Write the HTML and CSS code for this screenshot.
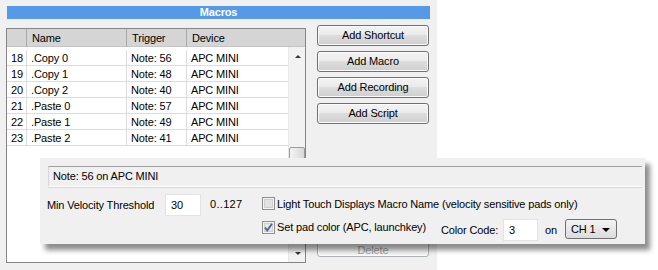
FILE: index.html
```html
<!DOCTYPE HTML>
<html>
<head>
	<meta http-equiv="Content-Type" content="text/html; charset=utf-8">
	<title>Macros</title>
	<link rel="stylesheet" href="styles.css">
</head>
<body>
<div class="screen">
	<div class="window">
		<div class="title">Macros</div>
		<div class="main">
			<div class="listbox">
				<div class="head">
					<div class="hcell num"></div>
					<div class="hcell">Name</div>
					<div class="hcell">Trigger</div>
					<div class="hcell last">Device</div>
				</div>
				<div class="body">
					<div class="rows">
						<div class="row"><span class="num">18</span><span>.Copy 0</span><span>Note: 56</span><span>APC MINI</span></div>
						<div class="row"><span class="num">19</span><span>.Copy 1</span><span>Note: 48</span><span>APC MINI</span></div>
						<div class="row"><span class="num">20</span><span>.Copy 2</span><span>Note: 40</span><span>APC MINI</span></div>
						<div class="row"><span class="num">21</span><span>.Paste 0</span><span>Note: 57</span><span>APC MINI</span></div>
						<div class="row"><span class="num">22</span><span>.Paste 1</span><span>Note: 49</span><span>APC MINI</span></div>
						<div class="row"><span class="num">23</span><span>.Paste 2</span><span>Note: 41</span><span>APC MINI</span></div>
					</div>
					<div class="scrollbar">
						<div class="arrow up"></div>
						<div class="thumb"></div>
						<div class="arrow down"></div>
					</div>
				</div>
			</div>
			<div class="buttons">
				<div class="btn">Add Shortcut</div>
				<div class="btn">Add Macro</div>
				<div class="btn">Add Recording</div>
				<div class="btn">Add Script</div>
				<div class="btn disabled">Delete</div>
			</div>
		</div>
	</div>

	<div class="popup">
		<div class="note">Note: 56 on APC MINI</div>
		<div class="line">
			<span class="lbl-vel">Min Velocity Threshold</span>
			<div class="field vel">30</div>
			<span class="range">0..127</span>
			<span class="check">
				<svg width="13" height="13" viewBox="0 0 13 13"><rect x="0.5" y="0.5" width="12" height="12" fill="#f4f4f4" stroke="#8e8f8f"/><rect x="2.5" y="2.5" width="8" height="8" fill="#e2e2e2" stroke="#d0d0d0"/></svg>
			</span>
			<span class="ctext">Light Touch Displays Macro Name (velocity sensitive pads only)</span>
		</div>
		<div class="line second">
			<span class="padcheck">
				<span class="check">
					<svg width="13" height="13" viewBox="0 0 13 13"><rect x="0.5" y="0.5" width="12" height="12" fill="#f4f4f4" stroke="#8e8f8f"/><rect x="2.5" y="2.5" width="8" height="8" fill="#e6e6e6" stroke="#d0d0d0"/><path d="M3 6.5 L5.2 9.5 L10 2.8" fill="none" stroke="#4a5f97" stroke-width="1.8"/></svg>
				</span>
				<span class="ctext">Set pad color (APC, launchkey)</span>
			</span>
			<span class="lbl-code">Color Code:</span>
			<div class="field code">3</div>
			<span class="on">on</span>
			<div class="select">CH 1<span class="caret"></span></div>
		</div>
	</div>
</div>
</body>
</html>
```

FILE: styles.css
```css
*{
	margin: 0;
	padding: 0;
	box-sizing: border-box;
}
body{
	background: #fff;
	font-family: "Liberation Sans", Arial, sans-serif;
	font-size: 11px;
	letter-spacing: -0.15px;
	color: #000;
}
.screen{
	position: relative;
	width: 658px;
	height: 270px;
}
.window{
	width: 437px;
	height: 270px;
	background: #f0f0f0;
	padding: 6px 0 0 6px;
}
.title{
	margin-left: 1px;
	width: 423px;
	height: 13px;
	background: #5599e8;
	color: #fff;
	font-weight: bold;
	text-align: center;
	line-height: 13px;
}
.main{
	display: flex;
	align-items: flex-start;
	margin-top: 6px;
}

/* list */
.listbox{
	width: 300px;
	height: 235px;
	margin-top: 3px;
	border: 1px solid #858585;
	background: #fff;
	display: flex;
	flex-direction: column;
}
.head{
	display: grid;
	grid-template-columns: 20px 100px 60px 1fr;
	height: 18px;
	background: #d5d5d5;
	border-bottom: 1px solid #c4c4c4;
}
.hcell{
	line-height: 18px;
	padding-left: 5px;
	border-right: 1px solid #a9a9a9;
}
.hcell.last{
	border-right: none;
}
.body{
	flex: 1;
	display: flex;
}
.rows{
	width: 281px;
	padding-top: 3px;
}
.row{
	display: grid;
	grid-template-columns: 20px 100px 60px 1fr;
	height: 16px;
	line-height: 16px;
	border-bottom: 1px solid #dcdcdc;
}
.row span{
	padding-left: 4px;
	border-right: 1px solid #dcdcdc;
}
.row span:last-child{
	border-right: none;
}
.row .num{
	padding-left: 0;
	padding-right: 3px;
	text-align: right;
}
.scrollbar{
	width: 17px;
	background: #f2f2f2;
	border-left: 1px solid #e8e8e8;
	position: relative;
}
.arrow{
	position: absolute;
	left: 6px;
	width: 0;
	height: 0;
	border-left: 3px solid transparent;
	border-right: 3px solid transparent;
}
.arrow.up{
	top: 8px;
	border-bottom: 3px solid #333;
}
.arrow.down{
	bottom: 7px;
	border-top: 3px solid #333;
}
.thumb{
	position: absolute;
	top: 100px;
	left: 0;
	width: 16px;
	height: 18px;
	border: 1px solid #9a9a9a;
	border-radius: 2px;
	background: linear-gradient(to right, #f4f4f4, #d8d8d8);
}

/* buttons */
.buttons{
	margin-left: 11px;
	width: 112px;
	height: 232px;
	display: flex;
	flex-direction: column;
	gap: 5px;
}
.btn{
	height: 21px;
	line-height: 19px;
	text-align: center;
	border: 1px solid #707070;
	border-radius: 3px;
	background: linear-gradient(#f3f3f3 0%, #ebebeb 45%, #dddddd 50%, #cfcfcf 100%);
	box-shadow: inset 0 0 0 1px #fcfcfc;
}
.btn.disabled{
	margin-top: auto;
	padding-top: 7px;
	line-height: 13px;
	color: #a0a0a0;
	border-color: #adb2b5;
	background: #f4f4f4;
}

/* popup panel */
.popup{
	position: absolute;
	left: 40px;
	top: 158px;
	width: 605px;
	height: 86px;
	background: #f0f0f0;
	padding: 8px 3px 0 7px;
	box-shadow: 5px 6px 5px rgba(0, 0, 0, 0.45);
}
.note{
	margin-left: 1px;
	height: 21px;
	line-height: 19px;
	padding-left: 4px;
	border-top: 1px solid #a0a0a0;
	border-left: 1px solid #d8d8d8;
	border-bottom: 1px solid #fff;
	box-shadow: 0 1px 0 #d8d8d8;
}
.line{
	display: flex;
	align-items: center;
	height: 22px;
	margin-top: 7px;
}
.line.second{
	margin-top: 3px;
}
.lbl-vel{
	width: 118px;
}
.field{
	height: 22px;
	line-height: 20px;
	background: #fff;
	border: 1px solid #e3e3e3;
	padding-left: 5px;
}
.field.vel{
	width: 36px;
}
.range{
	width: 52px;
	margin-left: 9px;
	margin-top: -3px;
	letter-spacing: 0.3px;
}
.check{
	width: 13px;
	height: 13px;
	margin-right: 2px;
	display: flex;
}
.line .check{
	margin-top: -3px;
}
.line .ctext{
	margin-top: -3px;
}
.padcheck{
	display: flex;
	align-items: center;
	margin-left: 215px;
	width: 179px;
}
.padcheck .check, .padcheck .ctext{
	margin-top: -6px;
}
.lbl-code{
	width: 62px;
}
.field.code{
	width: 35px;
}
.on{
	margin-left: 7px;
	width: 20px;
}
.select{
	width: 52px;
	height: 20px;
	margin-top: -2px;
	line-height: 18px;
	padding-left: 5px;
	border: 1px solid #707070;
	border-radius: 3px;
	background: linear-gradient(#f3f3f3, #dcdcdc);
	position: relative;
}
.caret{
	position: absolute;
	right: 6px;
	top: 8px;
	border-left: 4px solid transparent;
	border-right: 4px solid transparent;
	border-top: 4px solid #000;
}
```
